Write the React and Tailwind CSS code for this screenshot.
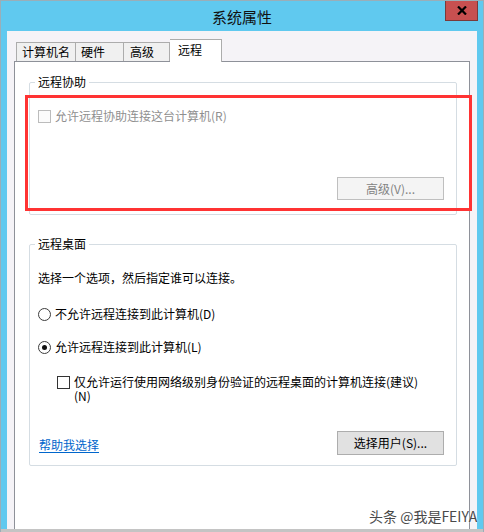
import React from "react";

const font = { fontFamily: '"Noto Sans CJK SC", "Microsoft YaHei", sans-serif' };

function Radio({ checked }) {
  return (
    <span className="w-[13px] h-[13px] rounded-full border border-[#3c3c3c] bg-white flex items-center justify-center shrink-0">
      {checked && <span className="w-[5px] h-[5px] rounded-full bg-[#111]" />}
    </span>
  );
}

export default function App() {
  return (
    <div
      className="relative w-[484px] h-[532px] flex flex-col bg-[#60c9ef] border-t border-l border-r border-[#9aaeb8] text-[12px] text-black overflow-hidden"
      style={font}
    >
      {/* title bar */}
      <div className="relative h-[30px] flex items-center justify-center shrink-0">
        <span className="text-[15px] text-[#111] leading-none">系统属性</span>
        <div className="absolute right-[5px] top-0 w-[33px] h-[20px] bg-[#c75050] border border-t-0 border-[#7a3a3a] flex items-center justify-center">
          <svg width="10" height="9" viewBox="0 0 10 9">
            <path d="M1 0.5 L9 8.5 M9 0.5 L1 8.5" stroke="#000" strokeWidth="2.2" />
          </svg>
        </div>
      </div>

      {/* client */}
      <div className="flex-1 mx-[6px] bg-[#f5f3f7] pt-[8px] px-[7px] flex flex-col min-h-0">
        {/* tabs */}
        <div className="flex items-end h-[22px] pl-[2px] relative z-10">
          <div className="h-[19px] w-[60px] border border-b-0 border-[#acacac] bg-[#f0f0f0] flex items-center pl-[5px] leading-none">计算机名</div>
          <div className="h-[19px] w-[48px] border border-b-0 border-l-0 border-[#acacac] bg-[#f0f0f0] flex items-center pl-[5px] leading-none">硬件</div>
          <div className="h-[19px] w-[46px] border border-b-0 border-l-0 border-[#acacac] bg-[#f0f0f0] flex items-center pl-[6px] leading-none">高级</div>
          <div className="h-[23px] w-[52px] -mb-[1px] border border-b-0 border-l-0 border-[#acacac] bg-white flex items-start pt-[4px] pl-[8px] leading-none">远程</div>
        </div>

        {/* panel */}
        <div className="flex-1 bg-white border border-b-0 border-[#8e9199] pt-[12px] pl-[14px] pr-[12px]">
          {/* group 1 */}
          <fieldset className="border border-[#d5dde3] rounded-[2px] m-0 p-0 min-w-0">
            <legend className="ml-[5px] px-[3px] leading-[16px] text-black">远程协助</legend>
            <div className="pt-[3px] pb-[14px] pl-[8px] pr-[12px] flex flex-col">
              <div className="flex items-center h-[14px] mt-[16px] gap-[4px] text-[#8f8f8f]">
                <span className="w-[13px] h-[13px] border border-[#bcbcbc] bg-[#fbfbfb] shrink-0" />
                <span className="leading-[14px]">允许远程协助连接这台计算机(R)</span>
              </div>
              <div className="mt-[54px] self-end w-[107px] h-[23px] border border-[#bfbfbf] bg-[#f4f4f4] flex items-center justify-center text-[#838383] leading-none">
                高级(V)...
              </div>
            </div>
          </fieldset>

          {/* group 2 */}
          <fieldset className="mt-[21px] border border-[#d5dde3] rounded-[2px] m-0 p-0 min-w-0">
            <legend className="ml-[5px] px-[3px] leading-[16px] text-black">远程桌面</legend>
            <div className="pt-[0px] pb-[10px] pl-[8px] pr-[12px] flex flex-col">
              <div className="mt-[18px] leading-[16px]">选择一个选项，然后指定谁可以连接。</div>
              <div className="mt-[20px] flex items-center h-[16px] gap-[4px]">
                <Radio />
                <span className="leading-[16px]">不允许远程连接到此计算机(D)</span>
              </div>
              <div className="mt-[17px] flex items-center h-[16px] gap-[4px]">
                <Radio checked />
                <span className="leading-[16px]">允许远程连接到此计算机(L)</span>
              </div>
              <div className="mt-[20px] ml-[19px] flex items-start gap-[4px]">
                <span className="mt-[1px] w-[13px] h-[13px] border border-[#333] bg-white shrink-0" />
                <div className="flex flex-col">
                  <span className="leading-[14px]">仅允许运行使用网络级别身份验证的远程桌面的计算机连接(建议)</span>
                  <span className="leading-[14px]">(N)</span>
                </div>
              </div>
              <div className="mt-[28px] flex items-end justify-between">
                <span className="ml-[1px] pb-[2px] leading-[16px] text-[#0066cc] underline underline-offset-2">帮助我选择</span>
                <div className="w-[107px] h-[24px] border border-[#adadad] bg-[#e1e1e1] flex items-center justify-center leading-none">
                  选择用户(S)...
                </div>
              </div>
            </div>
          </fieldset>
        </div>
      </div>

      {/* bottom strip */}
      <div className="h-[3px] bg-[#c4c4c4] shrink-0" />

      {/* red highlight */}
      <div className="absolute left-[24px] top-[94px] w-[447px] h-[116px] border-[3px] border-[#ff3333] pointer-events-none" />

      {/* watermark */}
      <div className="absolute left-[368px] top-[505px] text-[14px] leading-[20px] text-[#4a4a4a] [text-shadow:0_0_2px_#fff] whitespace-nowrap">
        头条 @我是FEIYA
      </div>
    </div>
  );
}
